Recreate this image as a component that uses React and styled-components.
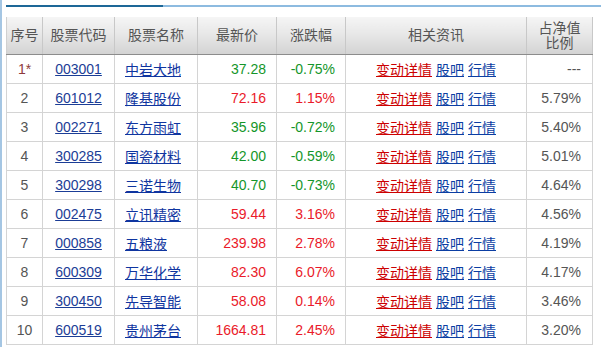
import React from 'react';
import styled, { createGlobalStyle } from 'styled-components';

const GlobalStyle = createGlobalStyle`
    body {
        margin: 0;
        background: #fff;
        font-family: "Liberation Sans", "Noto Sans CJK SC", sans-serif;
    }
`

const Page = styled.div`
    width: 601px;
    height: 347px;
    overflow: hidden;
    border-left: 2px solid #a5c6e3;
    box-sizing: border-box;
    padding: 5px 0 0 4px;
`

const TabRule = styled.div`
    display: flex;
    height: 2px;
    margin-bottom: 10px;

    .active {
        width: 157px;
        background: #1d6797;
    }

    .rest {
        flex: 1;
        background: #8dbbe0;
    }
`

const Grid = styled.table`
    width: 586px;
    border-collapse: collapse;
    table-layout: fixed;
    font-size: 14px;
    color: #555;
`

const HeadCell = styled.th`
    height: 37px;
    padding: 0;
    font-weight: normal;
    font-size: 14px;
    line-height: 15px;
    color: #555;
    text-align: center;
    background: linear-gradient(to bottom, #f5f5f5 0%, #e6e6e6 50%, #d3d3d3 100%);
    border-left: 1px solid #fafafa;
    border-right: 1px solid #c8c8c8;
    border-bottom: 1px solid #8c8c8c;

    &:first-child {
        border-left: 1px solid #d0d0d0;
    }
`

const Cell = styled.td`
    height: 28px;
    padding: 0 ${p => p.$pad || 0}px;
    text-align: ${p => p.$align || 'center'};
    border: 1px solid #d4d4d4;
    white-space: nowrap;
    color: ${p => p.$color || '#555'};
`

const CodeLink = styled.a`
    color: #1b3d96;
    text-decoration: underline;
`

const NameLink = styled.a`
    color: #0f35a0;
    text-decoration: underline;
`

const Quote = styled.span`
    color: ${p => (p.$down ? '#14962a' : '#ea1a2a')};
`

const NewsLink = styled.a`
    color: ${p => (p.$tone === 'red' ? '#cc0000' : '#0b3ea3')};
    text-decoration: underline;
    margin: 0 2px;
`

const rows = [
    ['1*', '003001', '中岩大地', '37.28', '-0.75%', '---'],
    ['2', '601012', '隆基股份', '72.16', '1.15%', '5.79%'],
    ['3', '002271', '东方雨虹', '35.96', '-0.72%', '5.40%'],
    ['4', '300285', '国瓷材料', '42.00', '-0.59%', '5.01%'],
    ['5', '300298', '三诺生物', '40.70', '-0.73%', '4.64%'],
    ['6', '002475', '立讯精密', '59.44', '3.16%', '4.56%'],
    ['7', '000858', '五粮液', '239.98', '2.78%', '4.19%'],
    ['8', '600309', '万华化学', '82.30', '6.07%', '4.17%'],
    ['9', '300450', '先导智能', '58.08', '0.14%', '3.46%'],
    ['10', '600519', '贵州茅台', '1664.81', '2.45%', '3.20%'],
]

const App = () => {
    const stop = (e) => e.preventDefault()

    return (
        <Page>
            <GlobalStyle />
            <TabRule>
                <div className='active' />
                <div className='rest' />
            </TabRule>
            <Grid>
                <colgroup>
                    <col style={{ width: 36 }} />
                    <col style={{ width: 72 }} />
                    <col style={{ width: 83 }} />
                    <col style={{ width: 79 }} />
                    <col style={{ width: 69 }} />
                    <col style={{ width: 181 }} />
                    <col style={{ width: 66 }} />
                </colgroup>
                <thead>
                    <tr>
                        <HeadCell>序号</HeadCell>
                        <HeadCell>股票代码</HeadCell>
                        <HeadCell>股票名称</HeadCell>
                        <HeadCell>最新价</HeadCell>
                        <HeadCell>涨跌幅</HeadCell>
                        <HeadCell>相关资讯</HeadCell>
                        <HeadCell>占净值<br />比例</HeadCell>
                    </tr>
                </thead>
                <tbody>
                    {rows.map(([no, code, name, price, change, weight]) => {
                        const down = change.startsWith('-')
                        return (
                            <tr key={code}>
                                <Cell $color={no === '1*' ? '#8e3b3b' : '#555'}>{no}</Cell>
                                <Cell><CodeLink href='#' onClick={stop}>{code}</CodeLink></Cell>
                                <Cell $align='left' $pad={10}><NameLink href='#' onClick={stop}>{name}</NameLink></Cell>
                                <Cell $align='right' $pad={10}><Quote $down={down}>{price}</Quote></Cell>
                                <Cell $align='right' $pad={10}><Quote $down={down}>{change}</Quote></Cell>
                                <Cell>
                                    <NewsLink $tone='red' href='#' onClick={stop}>变动详情</NewsLink>
                                    <NewsLink href='#' onClick={stop}>股吧</NewsLink>
                                    <NewsLink href='#' onClick={stop}>行情</NewsLink>
                                </Cell>
                                <Cell $align='right' $pad={11}>{weight}</Cell>
                            </tr>
                        )
                    })}
                </tbody>
            </Grid>
        </Page>
    )
}

export default App
